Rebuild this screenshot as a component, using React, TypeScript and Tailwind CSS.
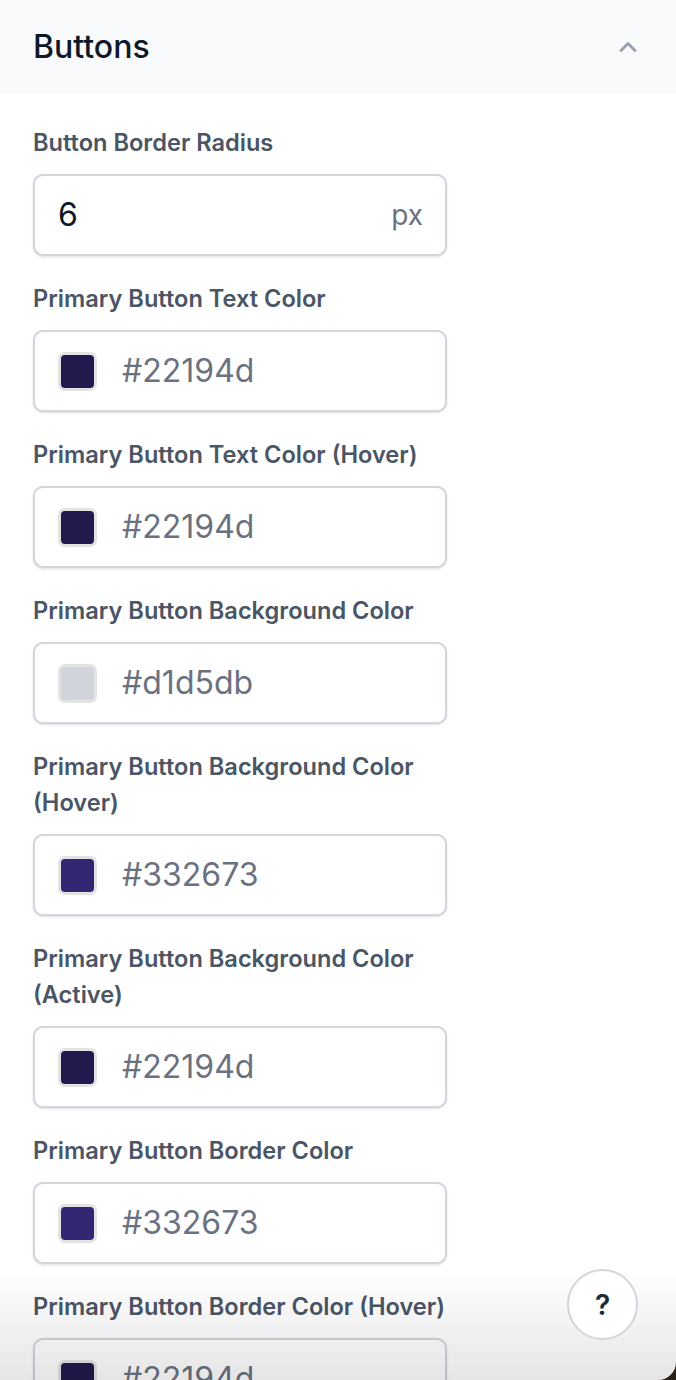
import { ChevronUp } from 'lucide-react';

type Field =
    | { label: string; kind: 'number'; value: string; unit: string }
    | { label: string; kind: 'color'; value: string };

const fields: Field[] = [
    { label: 'Button Border Radius', kind: 'number', value: '6', unit: 'px' },
    { label: 'Primary Button Text Color', kind: 'color', value: '#22194d' },
    { label: 'Primary Button Text Color (Hover)', kind: 'color', value: '#22194d' },
    { label: 'Primary Button Background Color', kind: 'color', value: '#d1d5db' },
    { label: 'Primary Button Background Color (Hover)', kind: 'color', value: '#332673' },
    { label: 'Primary Button Background Color (Active)', kind: 'color', value: '#22194d' },
    { label: 'Primary Button Border Color', kind: 'color', value: '#332673' },
    { label: 'Primary Button Border Color (Hover)', kind: 'color', value: '#22194d' },
];

function FieldRow({ field }: { field: Field }) {
    return (
        <div className="flex flex-col w-[414px]">
            <label className="text-[23.6px] leading-[36px] font-semibold text-gray-600 mb-[13px]">
                {field.label}
            </label>
            <div className="h-[82px] shrink-0 rounded-[10px] border-2 border-gray-300 bg-white shadow-sm flex items-center">
                {field.kind === 'number' ? (
                    <div className="flex items-center justify-between w-full pl-[23px] pr-[22px]">
                        <span className="text-[32px] text-gray-900">{field.value}</span>
                        <span className="text-[28px] text-gray-500">{field.unit}</span>
                    </div>
                ) : (
                    <div className="flex items-center pl-[23px] gap-[25px]">
                        <span
                            className="w-[39px] h-[39px] rounded-[7px] border-[3px] border-[#e3e3e3]"
                            style={{ backgroundColor: field.value }}
                        />
                        <span className="text-[32px] text-gray-500">{field.value}</span>
                    </div>
                )}
            </div>
        </div>
    );
}

export default function App() {
    return (
        <div className="bg-[#2a2118]" style={{ fontFamily: 'Inter, "Noto Sans", sans-serif' }}>
            <div className="relative h-[1380px] overflow-hidden bg-white rounded-br-[18px]">
                <div className="h-[94px] bg-gray-50 flex items-center justify-between pl-[33px] pr-[34px]">
                    <h2 className="text-[32px] font-medium text-gray-900">Buttons</h2>
                    <ChevronUp className="w-[28px] h-[28px] text-gray-400" strokeWidth={2.5} />
                </div>

                <div className="flex flex-col gap-[25px] px-[33px] pt-[31px]">
                    {fields.map((f) => (
                        <FieldRow key={f.label} field={f} />
                    ))}
                </div>

                {/* fade at the bottom of the scroll area */}
                <div className="absolute left-0 right-0 bottom-0 h-[110px] bg-gradient-to-b from-transparent to-black/10 pointer-events-none" />

                <button className="absolute left-[567px] top-[1269px] w-[71px] h-[71px] rounded-full border-2 border-gray-300 bg-white flex items-center justify-center text-[28px] font-semibold text-gray-800">
                    ?
                </button>
            </div>
        </div>
    );
}
